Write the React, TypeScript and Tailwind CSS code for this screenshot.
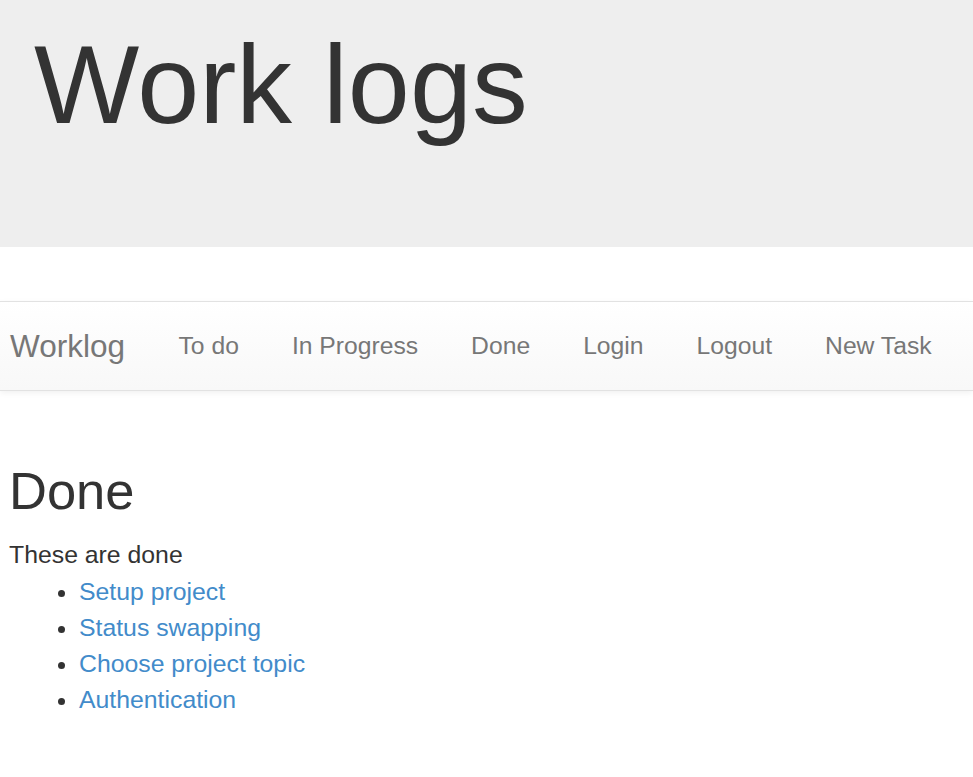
const navLinks = ["To do", "In Progress", "Done", "Login", "Logout", "New Task"];

const doneTasks = [
  "Setup project",
  "Status swapping",
  "Choose project topic",
  "Authentication",
];

export default function App() {
  return (
    <div className="min-h-screen bg-white font-['Liberation_Sans',Arial,sans-serif] text-[#333]">
      <div className="h-[247px] bg-[#eee] px-[34px] pt-[24px]">
        <h1 className="text-[111.5px] leading-[121px]">Work logs</h1>
      </div>

      <nav className="mt-[54px] flex h-[90px] items-center border-y border-[#e2e2e2] bg-gradient-to-b from-white to-[#f8f8f8] shadow-[0_2px_6px_rgba(0,0,0,0.06)]">
        <a href="#" className="pl-[10px] pr-[27px] text-[31.5px] leading-[36px] text-[#777]">
          Worklog
        </a>
        <ul className="flex">
          {navLinks.map((label) => (
            <li key={label}>
              <a href="#" className="block px-[26.5px] text-[24.7px] leading-[36px] text-[#777]">
                {label}
              </a>
            </li>
          ))}
        </ul>
      </nav>

      <main className="px-[9px] pt-[71px]">
        <h2 className="text-[52.5px] leading-[58px] mb-[17px]">Done</h2>
        <div className="text-[24.8px] leading-[36px]">
          These are done
          <ul className="mt-[1px] list-disc pl-[70px]">
            {doneTasks.map((task) => (
              <li key={task}>
                <a href="#" className="text-[#428bca]">
                  {task}
                </a>
              </li>
            ))}
          </ul>
        </div>
      </main>
    </div>
  );
}
